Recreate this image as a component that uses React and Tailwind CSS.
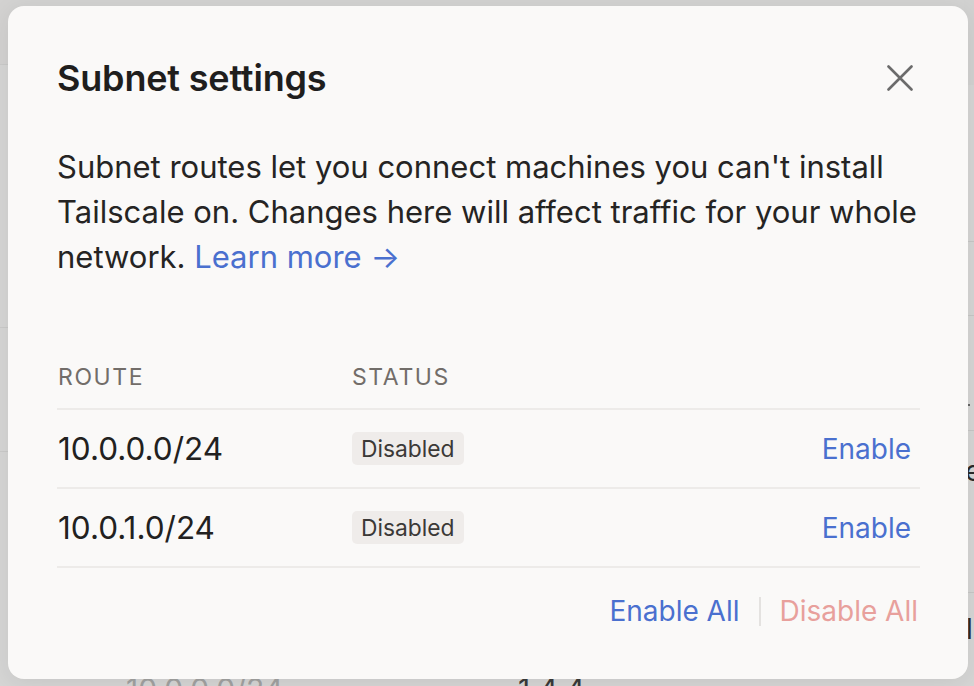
import React from "react";

function CloseIcon() {
  return (
    <svg width="26" height="26" viewBox="0 0 26 26" fill="none">
      <path d="M1.5 1.5L24.5 24.5M24.5 1.5L1.5 24.5" stroke="#6b6b6b" strokeWidth="2.6" strokeLinecap="round" />
    </svg>
  );
}

function Row({ route }) {
  return (
    <div className="flex h-[79px] items-center border-b-2 border-[#edebe9]">
      <div className="w-[295px] pl-[1px] text-[31.5px] leading-[38px] text-[#222120]">{route}</div>
      <div className="flex h-[33px] items-center rounded-[5px] bg-[#efecea] px-[9px] text-[22.8px] leading-[28px] text-[#3b3937]">
        Disabled
      </div>
      <div className="ml-auto pr-[9px] text-[28px] leading-[36px] text-[#4a70cf]">Enable</div>
    </div>
  );
}

export default function App() {
  return (
    <div className="relative h-[686px] w-[974px] overflow-hidden bg-[#d6d6d5] font-['Inter',sans-serif]">
      {/* dimmed page behind the dialog */}
      <div className="flex h-full w-full">
        <div className="flex w-[10px] shrink-0 flex-col">
          <div className="h-[65px] shrink-0 border-b border-[#cacac9] bg-[#d3d2d1]" />
          <div className="h-[263px] shrink-0 border-b border-[#cacac9]" />
          <div className="h-[124px] shrink-0 border-b border-[#cacac9]" />
        </div>
        <div className="flex flex-1 flex-col">
          <div className="h-[85px] shrink-0 bg-[#d3d3d2]" />
          <div className="h-[586px] shrink-0" />
          <div className="flex shrink-0 text-[30px] leading-[36px]">
            <span className="ml-[116px] w-[392px] text-[#a2a2a1]">10.0.0.0/24</span>
            <span className="text-[#3a3a3a]">1.4.4</span>
          </div>
        </div>
        <div className="flex w-[10px] shrink-0 flex-col">
          <div className="h-[85px] shrink-0 bg-[#d2d2d1]" />
          <div className="h-[157px] shrink-0 border-b border-[#c7c7c6]" />
          <div className="h-[74px] shrink-0 border-b border-[#c7c7c6]" />
          <div className="relative h-[115px] shrink-0 border-b border-[#c7c7c6]">
            <div className="absolute left-[1px] top-[88px] h-[2px] w-[5px] bg-[#666]" />
          </div>
          <div className="h-[162px] shrink-0 border-b border-[#c7c7c6] pl-[1px] pt-[22px] text-[28px] leading-[36px] text-[#2a2a2a]">
            e
          </div>
          <div className="shrink-0 pl-[2px] pt-[18px] text-[28px] leading-[36px] text-[#2a2a2a]">l</div>
        </div>
      </div>

      {/* dialog */}
      <div className="absolute left-[8px] top-[6px] flex h-[673px] w-[960px] flex-col rounded-[16px] bg-[#faf9f8] pl-[49px] pr-[48px] pt-[50px] shadow-[0_4px_24px_rgba(0,0,0,0.08)]">
        <div className="flex items-center justify-between">
          <h2 className="text-[36px] font-semibold leading-[44px] tracking-[-0.005em] text-[#1f1e1d]">Subnet settings</h2>
          <button className="flex h-[40px] w-[40px] items-center justify-center">
            <CloseIcon />
          </button>
        </div>

        <p className="mt-[44px] text-[31px] leading-[45px] text-[#252423]">
          Subnet routes let you connect machines you can't install Tailscale on. Changes here will affect traffic for your whole network.{" "}
          <span className="text-[#4a70cf]">Learn more →</span>
        </p>

        <div className="mt-[84px] flex flex-col">
          <div className="flex border-b-2 border-[#edebe9] pb-[17px] text-[23px] uppercase leading-[28px] tracking-[0.07em] text-[#726d69]">
            <div className="w-[295px] pl-[1px]">Route</div>
            <div>Status</div>
          </div>
          <Row route="10.0.0.0/24" />
          <Row route="10.0.1.0/24" />
        </div>

        <div className="mt-[25px] flex items-center justify-end pr-[2px] text-[28px] leading-[36px]">
          <span className="text-[#4a70cf]">Enable All</span>
          <span className="mx-[19px] h-[29px] w-[2px] bg-[#e4e2e0]" />
          <span className="text-[#e8a09c]">Disable All</span>
        </div>
      </div>
    </div>
  );
}
